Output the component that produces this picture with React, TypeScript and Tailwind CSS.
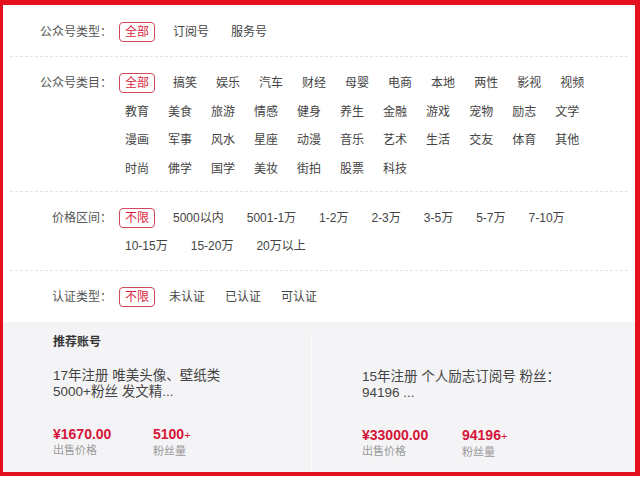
import React from 'react';

type FilterRow = {
  label: string;
  items: string[];
  firstGap: string;
  gap: string;
  pad: string;
  last?: boolean;
};

const rows: FilterRow[] = [
  {
    label: '公众号类型：',
    items: ['全部', '订阅号', '服务号'],
    firstGap: 'mr-[12px]',
    gap: 'mr-[10px]',
    pad: 'pt-[17px] pb-[14px]',
  },
  {
    label: '公众号类目：',
    items: [
      '全部', '搞笑', '娱乐', '汽车', '财经', '母婴', '电商', '本地', '两性', '影视', '视频',
      '教育', '美食', '旅游', '情感', '健身', '养生', '金融', '游戏', '宠物', '励志', '文学',
      '漫画', '军事', '风水', '星座', '动漫', '音乐', '艺术', '生活', '交友', '体育', '其他',
      '时尚', '佛学', '国学', '美妆', '街拍', '股票', '科技',
    ],
    firstGap: 'mr-[12px]',
    gap: 'mr-[7px]',
    pad: 'pt-[16px] pb-[12px]',
  },
  {
    label: '价格区间：',
    items: ['不限', '5000以内', '5001-1万', '1-2万', '2-3万', '3-5万', '5-7万', '7-10万', '10-15万', '15-20万', '20万以上'],
    firstGap: 'mr-[12px]',
    gap: 'mr-[11px]',
    pad: 'pt-[16px] pb-[14px]',
  },
  {
    label: '认证类型：',
    items: ['不限', '未认证', '已认证', '可认证'],
    firstGap: 'mr-[8px]',
    gap: 'mr-[8px]',
    pad: 'pt-[16px] pb-[15px]',
    last: true,
  },
];

type Account = {
  lines: string[];
  price: string;
  fans: string;
};

const accounts: Account[] = [
  { lines: ['17年注册 唯美头像、壁纸类', '5000+粉丝 发文精...'], price: '¥1670.00', fans: '5100' },
  { lines: ['15年注册 个人励志订阅号 粉丝：', '94196 ...'], price: '¥33000.00', fans: '94196' },
];

const Filter = ({ row }: { row: FilterRow }) => {
  return (
    <div
      className={`mx-[7px] flex ${row.pad} ${row.last ? '' : 'border-b border-dashed border-[#e4e4e4]'}`}
    >
      <div className="w-[102px] shrink-0 text-right text-[12px] leading-[20px] text-[#555]">{row.label}</div>
      <div className="ml-[7px] w-[505px] flex flex-wrap gap-y-[8.5px]">
        {row.items.map((item, i) => (
          <span
            key={item}
            className={`h-[20px] px-[5px] border rounded-[4px] text-[12px] leading-[18px] whitespace-nowrap ${
              i === 0
                ? `${row.firstGap} border-[#cf4a5f] text-[#d81e3c]`
                : `${row.gap} border-transparent text-[#444]`
            }`}
          >
            {item}
          </span>
        ))}
      </div>
    </div>
  );
};

const AccountCard = ({ account }: { account: Account }) => {
  return (
    <div>
      <div className="text-[13.5px] leading-[16px] text-[#444]">
        {account.lines.map((l) => (
          <div key={l} className="whitespace-nowrap">{l}</div>
        ))}
      </div>
      <div className="mt-[26px] flex">
        <div className="w-[100px]">
          <div className="text-[14px] leading-[17px] font-bold text-[#d6153a]">{account.price}</div>
          <div className="text-[11px] leading-[14px] text-[#9a9a9a]">出售价格</div>
        </div>
        <div>
          <div className="text-[14px] leading-[17px] font-bold text-[#d6153a]">
            {account.fans}
            <span className="text-[11px] font-normal">+</span>
          </div>
          <div className="text-[11px] leading-[14px] text-[#9a9a9a]">粉丝量</div>
        </div>
      </div>
    </div>
  );
};

export default function App() {
  return (
    <div
      className="w-[640px] h-[478px] bg-white pb-[2px]"
      style={{ fontFamily: '"Liberation Sans", "Noto Sans CJK SC", sans-serif' }}
    >
      <div className="h-full flex flex-col border-t-[5px] border-l-[3px] border-r-[5px] border-b-[4px] border-[#e5101d]">
        {rows.map((row) => (
          <Filter key={row.label} row={row} />
        ))}
        <div className="flex-1 flex bg-[#f4f4f6]">
          <div className="w-[308px] pl-[50px] pt-[12px]">
            <div className="text-[12px] leading-[16px] font-bold text-[#333]">推荐账号</div>
            <div className="mt-[18px]">
              <AccountCard account={accounts[0]} />
            </div>
          </div>
          <div className="mt-[12px] w-px bg-[#fcfcfd]" />
          <div className="flex-1 pl-[50px] pt-[47px]">
            <AccountCard account={accounts[1]} />
          </div>
        </div>
      </div>
    </div>
  );
}
